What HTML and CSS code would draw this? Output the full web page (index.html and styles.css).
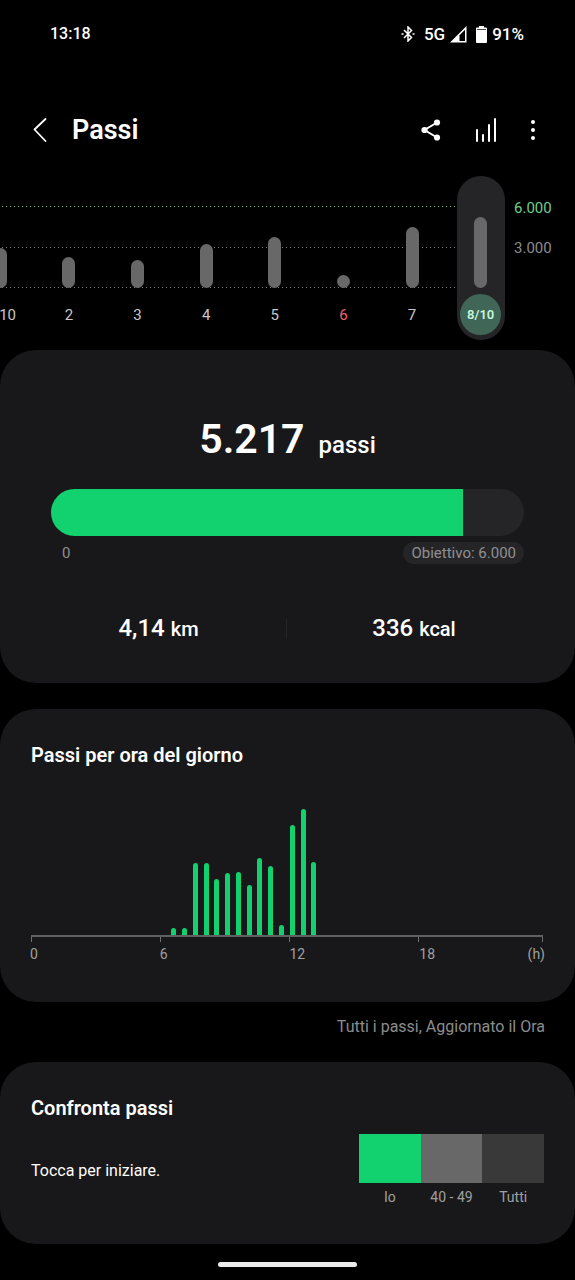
FILE: index.html
```html
<!DOCTYPE html>
<html lang="it">
<head>
<meta charset="utf-8">
<meta name="viewport" content="width=device-width, initial-scale=1">
<title>Passi</title>
<link rel="stylesheet" href="styles.css">
</head>
<body>
<div class="status">
  <span class="time">13:18</span>
  <div class="status-icons">
    <svg class="bluetooth" width="14" height="16" viewBox="0 0 14 16" aria-hidden="true"><path d="M3 4l7.500 7.500L7 15V1l3.500 3.500L3 12M0.500 8h2M11.500 8h2" fill="none" stroke="#fff" stroke-width="1.500"/></svg>
    <span>5G</span>
    <svg class="signal" width="17" height="17" viewBox="0 0 17 17" aria-hidden="true"><path d="M0 16.500L16.500 0v16.500z" fill="#fff"/><path d="M9.500 9.300L15 3.800V15H9.500z" fill="#000"/></svg>
    <svg class="battery" width="11" height="17" viewBox="0 0 11 17" aria-hidden="true"><path d="M3 0h5v1.500h2q1 0 1 1V16q0 1-1 1H1q-1 0-1-1V2.500q0-1 1-1h2z" fill="#fff"/><path d="M1 3.500h9" stroke="#000" stroke-width=".7"/></svg>
    <span>91%</span>
  </div>
</div>

<header class="toolbar">
  <button class="icon-button" aria-label="Indietro"><svg width="14" height="24" viewBox="0 0 14 24"><path d="M12.500 1L1.500 11.500L12.500 23" fill="none" stroke="#fff" stroke-width="1.800" stroke-linecap="round" stroke-linejoin="round"/></svg></button>
  <h1>Passi</h1>
  <div class="actions">
    <button class="icon-button" aria-label="Condividi"><svg width="20" height="22" viewBox="0 0 20 22"><path d="M16 3.500L3.500 11L16 18.500" fill="none" stroke="#fff" stroke-width="2"/><circle cx="16" cy="3.500" r="3.100" fill="#fff"/><circle cx="3.500" cy="11" r="3.100" fill="#fff"/><circle cx="16" cy="18.500" r="3.100" fill="#fff"/></svg></button>
    <button class="icon-button" aria-label="Statistiche"><svg width="22" height="24" viewBox="0 0 22 24"><path d="M2 12v11M8 17v6M14 7v16M20 1v22" stroke="#fff" stroke-width="2" stroke-linecap="round"/></svg></button>
    <button class="icon-button" aria-label="Altre opzioni"><svg width="6" height="22" viewBox="0 0 6 22"><g fill="#fff"><circle cx="3" cy="3" r="2"/><circle cx="3" cy="11" r="2"/><circle cx="3" cy="19" r="2"/></g></svg></button>
  </div>
</header>

<main>
  <section class="trend" aria-label="Passi giornalieri">
    <div class="days">
      <button class="day"><span class="day-bar" style="height:40px"></span><span class="day-label">1/10</span></button>
      <button class="day"><span class="day-bar" style="height:31px"></span><span class="day-label">2</span></button>
      <button class="day"><span class="day-bar" style="height:28px"></span><span class="day-label">3</span></button>
      <button class="day"><span class="day-bar" style="height:44px"></span><span class="day-label">4</span></button>
      <button class="day"><span class="day-bar" style="height:51px"></span><span class="day-label">5</span></button>
      <button class="day holiday"><span class="day-bar" style="height:13px"></span><span class="day-label">6</span></button>
      <button class="day"><span class="day-bar" style="height:61px"></span><span class="day-label">7</span></button>
      <button class="day selected" aria-current="date"><span class="day-bar" style="height:71px"></span><span class="day-label">8/10</span></button>
    </div>
    <div class="scale"><span class="goal-line">6.000</span><span>3.000</span></div>
  </section>

  <section class="card summary">
    <p class="total"><strong>5.217</strong> <span>passi</span></p>
    <div class="progress" role="progressbar" aria-label="Passi" aria-valuemin="0" aria-valuemax="6000" aria-valuenow="5217"><div class="progress-fill" style="width:87%"></div></div>
    <div class="range"><span>0</span><span class="goal">Obiettivo: 6.000</span></div>
    <div class="metrics">
      <p class="metric">4,14 <small>km</small></p>
      <p class="metric">336 <small>kcal</small></p>
    </div>
  </section>

  <section class="card hourly">
    <h2>Passi per ora del giorno</h2>
    <div class="hours">
      <i></i><i></i><i></i><i></i><i></i><i></i><i></i><i></i><i></i><i></i><i></i><i></i><i></i>
      <i style="height:7px"></i><i style="height:7px"></i><i style="height:72px"></i><i style="height:72px"></i><i style="height:56px"></i><i style="height:62px"></i><i style="height:63px"></i><i style="height:50px"></i><i style="height:77px"></i><i style="height:69px"></i><i style="height:10px"></i><i style="height:110px"></i><i style="height:126px"></i><i style="height:73px"></i>
      <i></i><i></i><i></i><i></i><i></i><i></i><i></i><i></i><i></i><i></i><i></i><i></i><i></i><i></i><i></i><i></i><i></i><i></i><i></i><i></i><i></i>
    </div>
    <div class="ticks"><i></i><i></i><i></i><i></i></div>
    <div class="tick-labels"><span>0</span><span>6</span><span>12</span><span class="last">18 <span>(h)</span></span></div>
  </section>

  <p class="note">Tutti i passi, Aggiornato il Ora</p>

  <section class="card compare">
    <h2>Confronta passi</h2>
    <div class="compare-body">
      <button class="start">Tocca per iniziare.</button>
      <div class="groups">
        <div class="group me"><span class="swatch"></span>Io</div>
        <div class="group peers"><span class="swatch"></span>40 - 49</div>
        <div class="group everyone"><span class="swatch"></span>Tutti</div>
      </div>
    </div>
  </section>
</main>
<div class="home-bar"></div>
</body>
</html>
```

FILE: styles.css
```css
* { box-sizing: border-box; }

body {
  margin: 0;
  background: #000;
  color: #fff;
  font: 15px/20px Roboto, "Liberation Sans", sans-serif;
  overflow-x: hidden;
}

h1, h2, p { margin: 0; }
svg { display: block; }

button {
  margin: 0;
  padding: 0;
  border: 0;
  background: none;
  color: inherit;
  font: inherit;
}

.status {
  display: flex;
  justify-content: space-between;
  align-items: center;
  height: 68px;
  padding: 0 51px 0 50px;
  font-size: 17px;
  font-weight: 500;
}

.time { font-size: 16px; }
.status-icons { display: flex; align-items: center; }
.bluetooth { margin-right: 9px; }
.signal { margin: 0 9px 0 5px; }
.battery { margin-right: 5px; }

.toolbar {
  display: flex;
  align-items: center;
  height: 108px;
  padding: 16px 39px 0 33px;
}

.toolbar h1 {
  margin-left: 25px;
  font-size: 27px;
  line-height: 32px;
  font-weight: 600;
}

.actions {
  display: flex;
  align-items: center;
  gap: 34px;
  margin-left: auto;
}

.trend {
  display: grid;
  grid-template-columns: 1fr 61px;
  height: 164px;
  overflow: hidden;
}

.actions .icon-button:last-child { margin-left: -1px; }

.days {
  --dots: transparent 1px 4px;
  display: grid;
  grid-template-columns: repeat(8, 1fr);
  margin: 0 -1px 0 -34px;
  background:
    repeating-linear-gradient(90deg, #72c488 0 1px, var(--dots)) 0 30px / calc(100% - 34px) 1px no-repeat,
    repeating-linear-gradient(90deg, #808080 0 1px, var(--dots)) 0 71px / calc(100% - 34px) 1px no-repeat,
    repeating-linear-gradient(90deg, #808080 0 1px, var(--dots)) 0 111px / calc(100% - 34px) 1px no-repeat;
}

.day {
  display: grid;
  grid-template-rows: 112px 41px;
  row-gap: 6px;
  justify-items: center;
  justify-self: center;
  align-content: start;
  width: 48px;
  border-radius: 24px;
  color: #c8c8c8;
}

.day-bar {
  align-self: end;
  width: 13px;
  border-radius: 7px;
  background: #686868;
}

.day-label {
  display: grid;
  place-items: center;
  width: 41px;
  border-radius: 50%;
}

.holiday { color: #ee6464; }
.selected { background: #252527; }

.selected .day-label {
  background: #3f6656;
  color: #c4f5dc;
  font-size: 13px;
  font-weight: 600;
}

.scale {
  display: flex;
  flex-direction: column;
  gap: 20px;
  padding-top: 22px;
  color: #8c8c8c;
}

.goal-line { color: #6fcf8b; }

.card {
  border-radius: 36px;
  background: #18181a;
}

.card h2 {
  font-size: 20px;
  line-height: 28px;
  font-weight: 600;
}

.summary {
  margin-top: 10px;
  padding: 64px 51px 40px;
}

.total {
  display: flex;
  justify-content: center;
  align-items: baseline;
  gap: 14px;
  font-size: 24px;
  line-height: 50px;
  font-weight: 500;
}

.total strong { font-size: 41px; font-weight: 600; }

.progress {
  height: 47px;
  margin-top: 19px;
  border-radius: 24px;
  background: #252527;
  overflow: hidden;
}

.progress-fill { height: 100%; background: #12d16f; }

.range {
  display: flex;
  justify-content: space-between;
  margin-top: 6px;
  padding-left: 11px;
  line-height: 22px;
  color: #8f8f91;
}

.goal {
  padding: 0 8px;
  border-radius: 11px;
  background: #252527;
}

.metrics {
  display: grid;
  grid-template-columns: 1fr 1fr;
  margin: 50px 3px 0 0;
}

.metric {
  padding: 0 20px 0 0;
  font-size: 24px;
  line-height: 28px;
  font-weight: 500;
  text-align: center;
}

.metric + .metric {
  padding: 0 0 0 21px;
  background: linear-gradient(#252527, #252527) 0 50% / 1px 20px no-repeat;
}

.metric small { font-size: 20px; }

.hourly {
  margin-top: 26px;
  padding: 32px 32px 38px 31px;
}

.hours {
  display: flex;
  justify-content: space-between;
  align-items: flex-end;
  height: 166px;
}

.hours i {
  width: 5px;
  border-radius: 3px 3px 0 0;
  background: #12d16f;
}

.ticks, .tick-labels {
  display: grid;
  grid-template-columns: 129fr 129fr 129fr 125fr;
}

.ticks { border-top: 2px solid #606060; }
.ticks i { height: 5px; border-left: 1px solid #707070; }
.ticks i:last-child { border-right: 1px solid #707070; }

.tick-labels {
  margin: 2px -2px 0 -1px;
  font-size: 14px;
  color: #a0a0a0;
}

.last { display: flex; justify-content: space-between; }

.note {
  padding: 15px 30px;
  color: #8c8c8c;
  font-size: 16px;
  text-align: right;
}

.compare {
  margin-top: 10px;
  padding: 32px 31px 37px;
}

.compare-body {
  display: flex;
  justify-content: space-between;
  margin-top: 12px;
}

.start {
  align-self: flex-start;
  margin-top: 27px;
  font-size: 16px;
}

.groups {
  display: grid;
  grid-template-columns: repeat(3, 1fr);
  width: 185px;
}

.group {
  color: #a0a0a0;
  font-size: 14px;
  text-align: center;
}

.swatch {
  display: block;
  height: 49px;
  margin-bottom: 4px;
}

.me .swatch { background: #12d16f; }
.peers .swatch { background: #686868; }
.everyone .swatch { background: #39393a; }

.home-bar {
  width: 139px;
  height: 5px;
  margin: 18px auto 12px;
  border-radius: 3px;
  background: #ececec;
}
```
